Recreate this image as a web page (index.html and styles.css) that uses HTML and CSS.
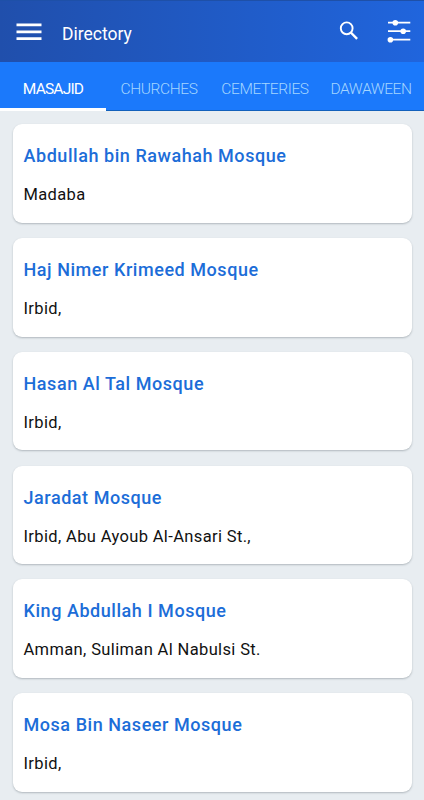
FILE: index.html
```html
<!DOCTYPE html>
<html lang="en">
<head>
  <meta charset="UTF-8">
  <meta name="viewport" content="width=device-width, initial-scale=1.0">
  <title>Directory</title>
  <link rel="stylesheet" href="styles.css">
</head>
<body>
  <header class="topbar">
    <svg class="menu-icon" width="26" height="18" viewBox="0 0 26 18">
      <path d="M.5 1.8h25M.5 8.8h25M.5 15.6h25" stroke="#fff" stroke-width="2.8"/>
    </svg>
    <h1>Directory</h1>
    <svg class="search-icon" width="20" height="20" viewBox="0 0 20 20" fill="none" stroke="#fff">
      <circle cx="7.7" cy="7.3" r="5.9" stroke-width="1.9"/>
      <path d="M11.8 11.5l6.3 6.3" stroke-width="2.4"/>
    </svg>
    <svg class="filter-icon" width="24" height="24" viewBox="0 0 24 24">
      <path d="M1 3.7h22.3M1 12.1h22.3M1 20.6h22.3" stroke="#fff" stroke-width="1.7"/>
      <g fill="#fff">
        <circle cx="8.3" cy="3.8" r="2.8"/>
        <circle cx="16.2" cy="12.2" r="2.8"/>
        <circle cx="3.4" cy="20.7" r="2.8"/>
      </g>
    </svg>
  </header>

  <nav class="tabs">
    <a class="tab active">MASAJID</a>
    <a class="tab">CHURCHES</a>
    <a class="tab">CEMETERIES</a>
    <a class="tab">DAWAWEEN</a>
  </nav>

  <main class="list">
    <div class="card">
      <h2>Abdullah bin Rawahah Mosque</h2>
      <p>Madaba</p>
    </div>
    <div class="card">
      <h2>Haj Nimer Krimeed Mosque</h2>
      <p>Irbid,</p>
    </div>
    <div class="card">
      <h2>Hasan Al Tal Mosque</h2>
      <p>Irbid,</p>
    </div>
    <div class="card">
      <h2>Jaradat Mosque</h2>
      <p>Irbid, Abu Ayoub Al-Ansari St.,</p>
    </div>
    <div class="card">
      <h2>King Abdullah I Mosque</h2>
      <p>Amman, Suliman Al Nabulsi St.</p>
    </div>
    <div class="card">
      <h2>Mosa Bin Naseer Mosque</h2>
      <p>Irbid,</p>
    </div>
  </main>
</body>
</html>
```

FILE: styles.css
```css
:root {
  --bg-color: #e8edf1;
  --tab-bg: #1b79fb;
  --tab-text: #a5d6ff;
  --link: #1c6dd8;
  --font-sans: Roboto, sans-serif;
}

*, *::before, *::after {
  box-sizing: border-box;
}

body {
  margin: 0;
  height: 800px;
  overflow: hidden;
  font-family: var(--font-sans);
  background-color: var(--bg-color);
}

.topbar {
  display: flex;
  align-items: center;
  height: 62px;
  padding: 0 13px 2px 16px;
  background: linear-gradient(90deg, #204fac, #2065dd);
  border-top: 1px solid #1e50a8;
}

.topbar h1 {
  flex: 1;
  margin: 6px 0 0 20px;
  font-size: 17.5px;
  font-weight: 400;
  line-height: 22px;
  color: #fff;
}

.menu-icon {
  margin-top: 2px;
}

.search-icon {
  margin-right: 28px;
}

/* Tabs */
.tabs {
  display: grid;
  grid-template-columns: repeat(4, 1fr);
  height: 49px;
  background-color: var(--tab-bg);
  box-shadow: inset 0 -1px 0 #1260bb;
}

.tab {
  display: flex;
  align-items: center;
  justify-content: center;
  padding-top: 7px;
  border-bottom: 3px solid transparent;
  font-size: 15.5px;
  font-weight: 300;
  letter-spacing: -0.4px;
  color: var(--tab-text);
}

.tab.active {
  font-weight: 400;
  letter-spacing: -0.8px;
  color: #fff;
  border-bottom-color: #fff;
}

/* Cards */
.list {
  display: flex;
  flex-direction: column;
  gap: 15.3px;
  padding: 13.3px 12px 0 12.5px;
}

.card {
  flex: none;
  height: 98.5px;
  padding: 20px 11px 0;
  background-color: #fff;
  border-radius: 9px;
  box-shadow: 0 1px 2px rgba(60, 70, 80, 0.32);
}

.card h2 {
  margin: 0 0 16px;
  font-size: 18px;
  font-weight: 500;
  line-height: 24px;
  letter-spacing: 0.55px;
  color: var(--link);
}

.card p {
  margin: 0;
  font-size: 16.5px;
  line-height: 22px;
  letter-spacing: 0.36px;
  color: #111;
}
```
